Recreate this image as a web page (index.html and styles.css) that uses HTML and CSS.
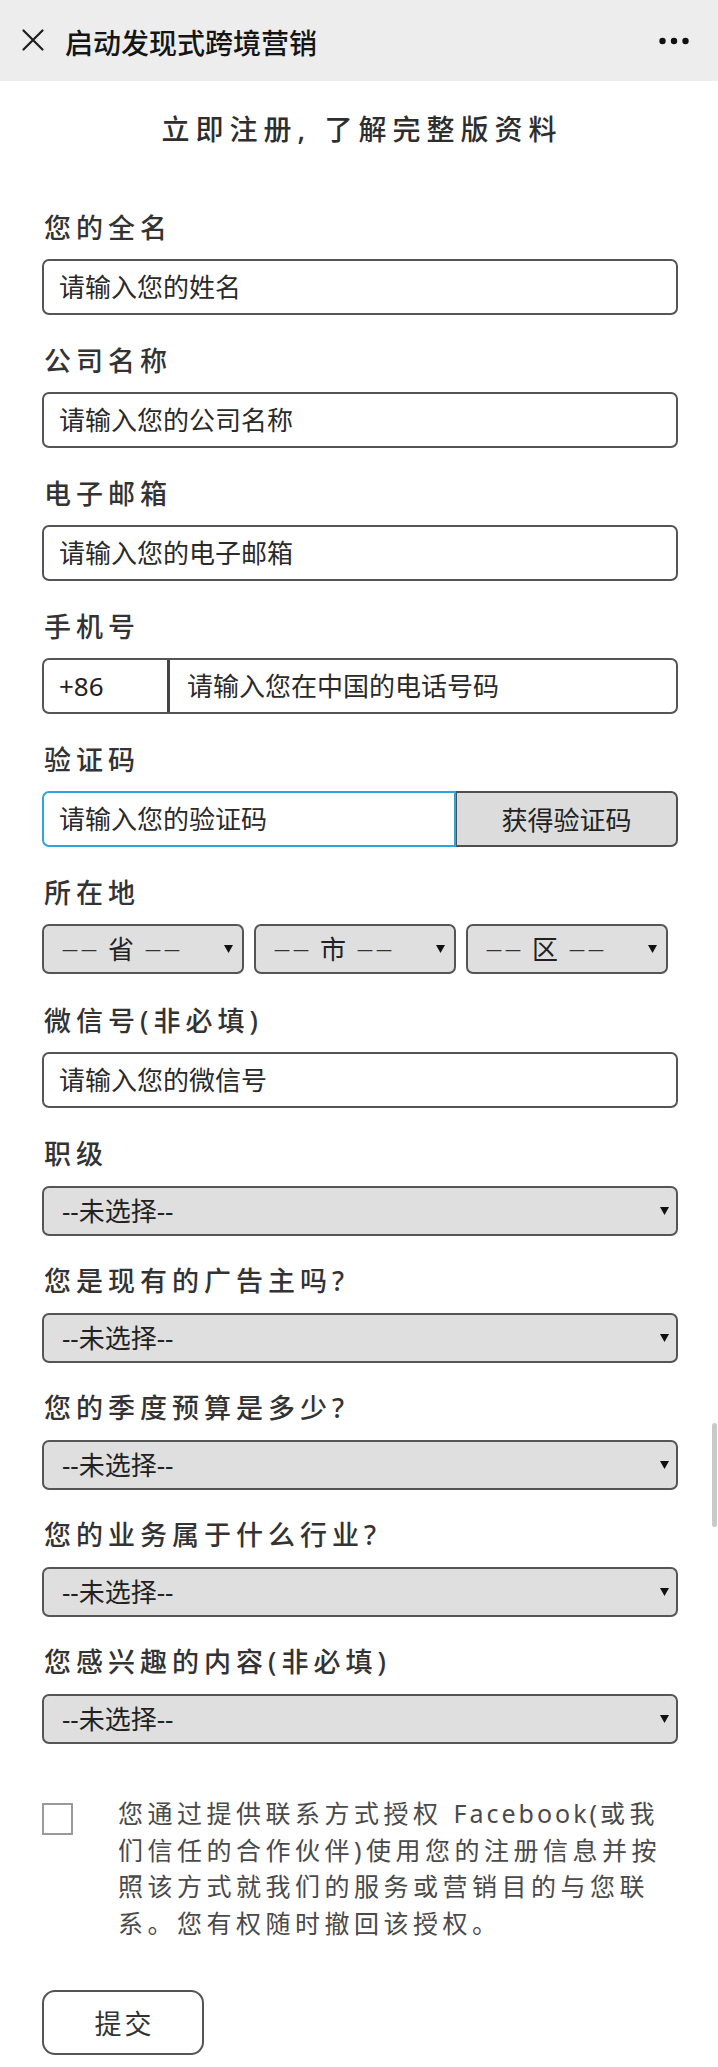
FILE: index.html
```html
<!DOCTYPE html>
<html lang="zh-CN">
<head>
<meta charset="utf-8">
<title>启动发现式跨境营销</title>
<link rel="stylesheet" href="styles.css">
</head>
<body>
<div class="page">
  <header class="topbar">
    <svg class="close-icon" width="22" height="22" viewBox="0 0 22 22" aria-hidden="true">
      <path d="M1.5 1.5L20.5 20.5M20.5 1.5L1.5 20.5" stroke="#1e1e1e" stroke-width="2.2" fill="none" stroke-linecap="round"/>
    </svg>
    <div class="topbar-title">启动发现式跨境营销</div>
    <svg class="more-icon" width="30" height="8" viewBox="0 0 30 8" aria-hidden="true">
      <circle cx="3.5" cy="4" r="3.2" fill="#111"/>
      <circle cx="15" cy="4" r="3.2" fill="#111"/>
      <circle cx="26.5" cy="4" r="3.2" fill="#111"/>
    </svg>
  </header>

  <h1 class="headline">立即注册, 了解完整版资料</h1>

  <form class="form">
    <div class="group">
      <label class="label">您的全名</label>
      <input class="field" type="text" placeholder="请输入您的姓名">
    </div>
    <div class="group">
      <label class="label">公司名称</label>
      <input class="field" type="text" placeholder="请输入您的公司名称">
    </div>
    <div class="group">
      <label class="label">电子邮箱</label>
      <input class="field" type="text" placeholder="请输入您的电子邮箱">
    </div>
    <div class="group">
      <label class="label">手机号</label>
      <div class="phone">
        <span class="phone-code">+86</span>
        <input class="phone-input" type="text" placeholder="请输入您在中国的电话号码">
      </div>
    </div>
    <div class="group">
      <label class="label">验证码</label>
      <div class="verify">
        <input class="verify-input" type="text" placeholder="请输入您的验证码">
        <button class="verify-btn" type="button">获得验证码</button>
      </div>
    </div>
    <div class="group group-location">
      <label class="label">所在地</label>
      <div class="location">
        <div class="loc-box"><span class="dash">——</span><span>省</span><span class="dash">——</span>
          <svg class="arrow" width="9" height="8" viewBox="0 0 9 8" aria-hidden="true"><path d="M0 0H9L4.5 8Z" fill="#111"/></svg>
        </div>
        <div class="loc-box"><span class="dash">——</span><span>市</span><span class="dash">——</span>
          <svg class="arrow" width="9" height="8" viewBox="0 0 9 8" aria-hidden="true"><path d="M0 0H9L4.5 8Z" fill="#111"/></svg>
        </div>
        <div class="loc-box"><span class="dash">——</span><span>区</span><span class="dash">——</span>
          <svg class="arrow" width="9" height="8" viewBox="0 0 9 8" aria-hidden="true"><path d="M0 0H9L4.5 8Z" fill="#111"/></svg>
        </div>
      </div>
    </div>
    <div class="group">
      <label class="label">微信号(非必填)</label>
      <input class="field" type="text" placeholder="请输入您的微信号">
    </div>
    <div class="group group-select">
      <label class="label">职级</label>
      <div class="select-wrap">
        <select class="select"><option>--未选择--</option></select>
        <svg class="arrow" width="9" height="8" viewBox="0 0 9 8" aria-hidden="true"><path d="M0 0H9L4.5 8Z" fill="#111"/></svg>
      </div>
    </div>
    <div class="group group-select">
      <label class="label">您是现有的广告主吗?</label>
      <div class="select-wrap">
        <select class="select"><option>--未选择--</option></select>
        <svg class="arrow" width="9" height="8" viewBox="0 0 9 8" aria-hidden="true"><path d="M0 0H9L4.5 8Z" fill="#111"/></svg>
      </div>
    </div>
    <div class="group group-select">
      <label class="label">您的季度预算是多少?</label>
      <div class="select-wrap">
        <select class="select"><option>--未选择--</option></select>
        <svg class="arrow" width="9" height="8" viewBox="0 0 9 8" aria-hidden="true"><path d="M0 0H9L4.5 8Z" fill="#111"/></svg>
      </div>
    </div>
    <div class="group group-select">
      <label class="label">您的业务属于什么行业?</label>
      <div class="select-wrap">
        <select class="select"><option>--未选择--</option></select>
        <svg class="arrow" width="9" height="8" viewBox="0 0 9 8" aria-hidden="true"><path d="M0 0H9L4.5 8Z" fill="#111"/></svg>
      </div>
    </div>
    <div class="group group-select">
      <label class="label">您感兴趣的内容(非必填)</label>
      <div class="select-wrap">
        <select class="select"><option>--未选择--</option></select>
        <svg class="arrow" width="9" height="8" viewBox="0 0 9 8" aria-hidden="true"><path d="M0 0H9L4.5 8Z" fill="#111"/></svg>
      </div>
    </div>

    <div class="consent">
      <input class="check" type="checkbox">
      <p class="consent-text">您通过提供联系方式授权 <span class="latin">Facebook(</span>或我<br>们信任的合作伙伴)使用您的注册信息并按<br>照该方式就我们的服务或营销目的与您联<br>系。您有权随时撤回该授权。</p>
    </div>

    <button class="submit" type="button">提交</button>
  </form>

  <div class="scroll-thumb"></div>
</div>
</body>
</html>
```

FILE: styles.css
```css
* {
  box-sizing: border-box;
}

html, body {
  margin: 0;
  padding: 0;
  background: #ffffff;
  overflow: hidden;
}

body {
  font-family: "Noto Sans", "Noto Sans CJK SC", sans-serif;
  color: #333333;
}

.page {
  position: relative;
  width: 718px;
  height: 2067px;
}

/* top bar */
.topbar {
  height: 81px;
  background: #ededed;
  display: flex;
  align-items: center;
  padding: 0 29px 0 22px;
  gap: 21px;
}

.close-icon {
  flex: none;
  margin-top: -2px;
}

.topbar-title {
  flex: 1;
  font-size: 28px;
  font-weight: 500;
  line-height: 36px;
  color: #151515;
  margin-top: 4px;
}

.more-icon {
  flex: none;
}

/* headline */
.headline {
  margin: 28px 0 0;
  font-size: 28px;
  font-weight: 500;
  line-height: 40px;
  letter-spacing: 6px;
  padding-left: 6px;
  text-align: center;
  color: #2e2e2e;
}

/* form */
.form {
  padding: 61px 40px 0 42px;
}

.group {
  margin-bottom: 28px;
}

.group-select {
  margin-bottom: 27px;
}

.group-select .label {
  margin-bottom: 14px;
}

.group-location {
  margin-bottom: 29px;
}

.label {
  display: block;
  font-size: 27px;
  font-weight: 500;
  line-height: 36px;
  letter-spacing: 5px;
  padding-left: 2px;
  margin-bottom: 13px;
  color: #333333;
}

.field,
.phone-input,
.verify-input {
  font-family: "Noto Sans", "Noto Sans CJK SC", sans-serif;
  font-size: 26px;
  color: #222;
  outline: none;
}

.field::placeholder,
.phone-input::placeholder,
.verify-input::placeholder {
  color: #2a2a2a;
  opacity: 1;
}

.field {
  display: block;
  width: 100%;
  height: 56px;
  border: 2px solid #555555;
  border-radius: 7px;
  padding: 0 0 0 15px;
  background: #ffffff;
}

/* phone */
.phone {
  display: flex;
  height: 56px;
  border: 2px solid #555555;
  border-radius: 7px;
  overflow: hidden;
  background: #ffffff;
}

.phone-code {
  flex: none;
  width: 126px;
  border-right: 3px solid #444444;
  display: flex;
  align-items: center;
  padding-left: 15px;
  font-size: 26px;
  color: #222;
}

.phone-input {
  flex: 1;
  min-width: 0;
  border: none;
  padding: 0 0 0 17px;
  background: transparent;
}

/* verification */
.verify {
  display: flex;
  height: 56px;
}

.verify-input {
  flex: none;
  width: 414px;
  height: 100%;
  border: 2px solid #2fa3dc;
  border-radius: 7px 0 0 7px;
  padding: 0 0 0 15px;
  background: #ffffff;
}

.verify-btn {
  flex: 1;
  height: 100%;
  border: 2px solid #505050;
  border-left-width: 1px;
  border-radius: 0 7px 7px 0;
  background: #dcdcdc;
  font-family: "Noto Sans", "Noto Sans CJK SC", sans-serif;
  font-size: 26px;
  color: #222;
  padding: 0;
}

/* location */
.location {
  display: flex;
  gap: 10px;
}

.loc-box {
  position: relative;
  width: 202px;
  height: 50px;
  border: 2px solid #555555;
  border-radius: 7px;
  background: #dfdfdf;
  display: flex;
  align-items: center;
  gap: 11px;
  padding-left: 18px;
  font-size: 26px;
  line-height: 30px;
  color: #222;
}

.dash {
  font-size: 16px;
  letter-spacing: 3px;
  margin-right: -3px;
  color: #333;
}

/* selects */
.select-wrap {
  position: relative;
}

.select {
  display: block;
  width: 100%;
  height: 50px;
  -webkit-appearance: none;
  appearance: none;
  border: 2px solid #555555;
  border-radius: 7px;
  background: #dfdfdf;
  font-family: "Noto Sans", "Noto Sans CJK SC", sans-serif;
  font-size: 26px;
  color: #222;
  padding: 0 0 0 18px;
  outline: none;
}

.arrow {
  position: absolute;
  right: 9px;
  top: 50%;
  margin-top: -4px;
}

/* consent */
.consent {
  display: flex;
  align-items: flex-start;
  gap: 45px;
  margin-top: 51px;
}

.check {
  -webkit-appearance: none;
  appearance: none;
  flex: none;
  width: 31px;
  height: 32px;
  margin: 8px 0 0;
  border: 2px solid #9a9a9a;
  border-radius: 0;
  background: #ffffff;
}

.consent-text {
  margin: 0;
  font-size: 25px;
  line-height: 36.5px;
  letter-spacing: 4.5px;
  color: #4a4a4a;
  white-space: nowrap;
}

.latin {
  letter-spacing: 3px;
}

/* submit */
.submit {
  display: block;
  margin-top: 49px;
  width: 162px;
  height: 65px;
  border: 2px solid #555555;
  border-radius: 13px;
  background: #ffffff;
  font-family: "Noto Sans", "Noto Sans CJK SC", sans-serif;
  font-size: 27px;
  letter-spacing: 3px;
  padding: 0 0 0 3px;
  color: #333;
}

/* scroll indicator overlay */
.scroll-thumb {
  position: absolute;
  right: 1px;
  top: 1423px;
  width: 5px;
  height: 104px;
  border-radius: 3px;
  background: #c9c9c9;
}
```
